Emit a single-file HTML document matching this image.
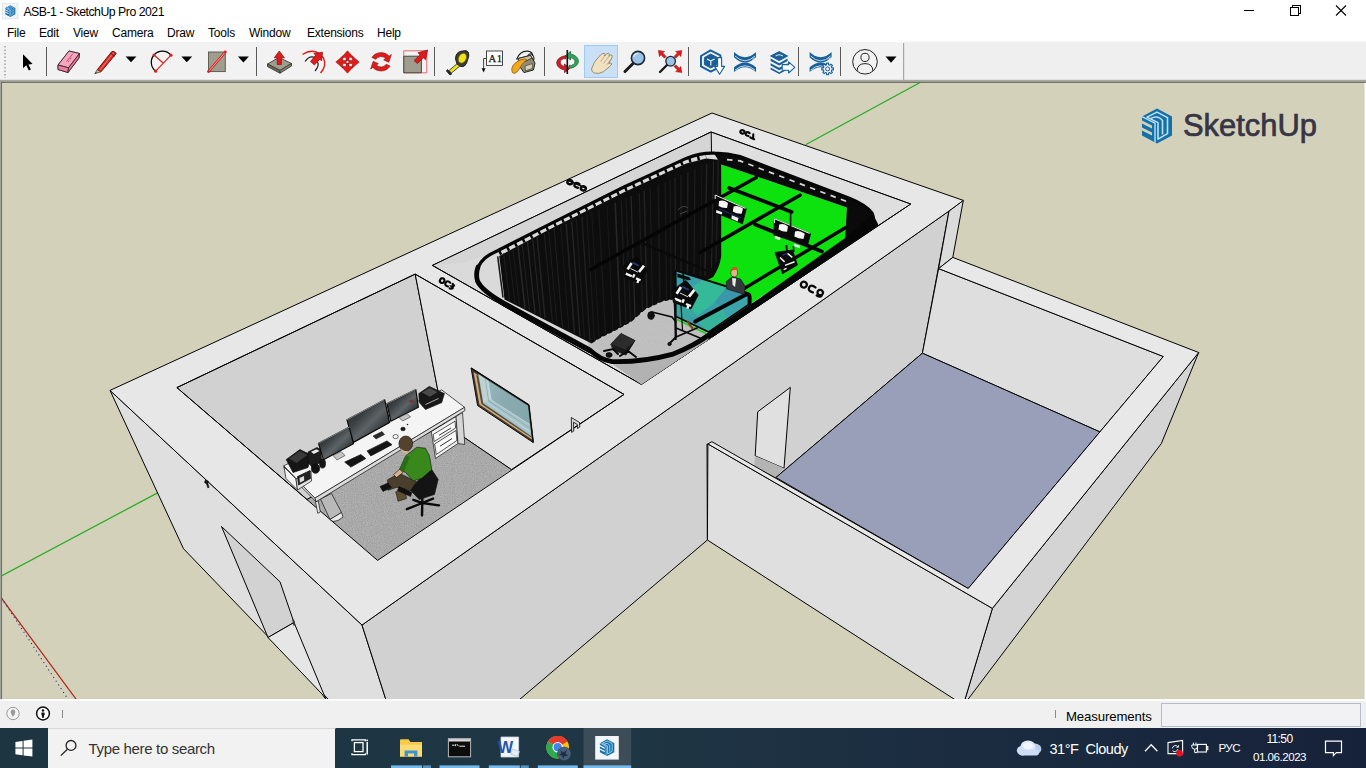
<!DOCTYPE html>
<html lang="en">
<head>
<meta charset="utf-8">
<title>ASB-1 - SketchUp Pro 2021</title>
<style>
*{box-sizing:border-box;margin:0;padding:0}
html,body{width:1366px;height:768px;overflow:hidden;background:#fff;font-family:"Liberation Sans",sans-serif;color:#000}
#titlebar{position:absolute;left:0;top:0;width:1366px;height:22px;background:#fff}
#title{position:absolute;left:23.4px;top:4.6px;font-size:12.3px;line-height:14px;white-space:nowrap;letter-spacing:-0.5px}
#menubar{position:absolute;left:0;top:22px;width:1366px;height:19px;background:#fff}
#menubar span{position:absolute;top:3.8px;font-size:12px;line-height:14px;white-space:nowrap;letter-spacing:-0.22px}
#toolbar{position:absolute;left:0;top:41.5px;width:1366px;height:40px;background:#f2f2f2}
#viewport{position:absolute;left:0;top:81px;width:1366px;height:619px;background:#d3d1b9;overflow:hidden}
#statusbar{position:absolute;left:0;top:699.4px;width:1366px;height:29px;background:#f0f0f0;border-top:2px solid #fcfcfd}
#meas{position:absolute;left:1066px;top:7.4px;font-size:13.2px;line-height:15px;letter-spacing:-0.12px}
#measbox{position:absolute;left:1161px;top:2px;width:199.6px;height:23.8px;background:#f2f2f4;border:1px solid #b5bbcb}
#taskbar{position:absolute;left:0;top:728px;width:1366px;height:40px;background:linear-gradient(90deg,#1d3441 0%,#1f3644 45%,#1b2c40 70%,#16223a 100%)}
#search{position:absolute;left:48px;top:0;width:287px;height:40px;background:#f2f2f2}
#search span{position:absolute;left:40.5px;top:12px;font-size:15px;line-height:18px;color:#333;white-space:nowrap;letter-spacing:-0.33px}
.tray{position:absolute;color:#fff;white-space:nowrap}
svg{position:absolute;left:0;top:0;overflow:visible}
</style>
</head>
<body>
<div id="titlebar">
  <div id="title">ASB-1 - SketchUp Pro 2021</div>
</div>
<div id="menubar">
  <span style="left:7px">File</span>
  <span style="left:39px">Edit</span>
  <span style="left:73px">View</span>
  <span style="left:112px">Camera</span>
  <span style="left:167px">Draw</span>
  <span style="left:208px">Tools</span>
  <span style="left:249px">Window</span>
  <span style="left:307px">Extensions</span>
  <span style="left:377px">Help</span>
</div>
<div id="toolbar"></div>
<div id="viewport">
<svg id="scene" width="1366" height="619" viewBox="0 81 1366 619" style="left:0;top:0">
<g id="axes" fill="none" stroke-width="1.2">
  <line x1="0" y1="576.6" x2="160" y2="491.6" stroke="#22ac22"/>
  <line x1="806" y1="144.5" x2="921" y2="82" stroke="#22ac22"/>
  <line x1="0" y1="596.2" x2="77" y2="700.4" stroke="#b0281c"/>
  <line x1="1.5" y1="598" x2="68" y2="699.2" stroke="#26268c" stroke-width="1.1" stroke-dasharray="1.1 3.4"/>
</g>
<g id="main" stroke="#000" stroke-width="1" stroke-linejoin="round">
  <!-- west face -->
  <polygon points="110,390.4 362,625 386,700 329,700 183.5,548.7" fill="#dfdfdf"/>
  <!-- west door -->
  <polygon points="221.5,526.5 280,581.8 294,622.5 268,637.5" fill="#d2d2d2"/>
  <polygon points="268,637.5 294,622.5 326,699.5 322,694" fill="#e6e6e6"/>
  <!-- front face -->
  <polygon points="949,211 362,625 386,700 519,700 707.4,540 707,444 776,477.5 922.4,353.2" fill="#d1d1d1"/>
  <!-- east strip -->
  <polygon points="949,211 963.3,200.4 952.8,257.4 938.6,268.6" fill="#dbdbdb"/>
  <!-- roof -->
  <polygon points="712,113 963.3,200.4 949,211 362,625 110,390.4" fill="#e7e7e7"/>
</g>
<g id="annex" stroke="#000" stroke-width="1" stroke-linejoin="round">
  <!-- door opening in main front face -->
  <polygon points="757.7,411.8 790.3,387.4 784,468.3 755.2,455.9" fill="#e0e0e0"/>
  <polygon points="755.2,455.9 784,468.3 775.9,477.5 754.2,466" fill="#b4b4b4" stroke="none"/>
  <!-- back wall inner face -->
  <polygon points="938.6,268.6 1163.3,356.5 1099.9,431.9 922.4,353.2" fill="#dedede"/>
  <!-- blue floor -->
  <polygon points="922.4,353.2 1099.9,431.9 968.2,588.5 775.9,477.5" fill="#999fb9"/>
  <!-- right outer face -->
  <polygon points="1198.7,352.5 1161.3,443.6 967.5,700 964.8,700 992.4,608.4" fill="#d4d4d4"/>
  <!-- front wall outer face -->
  <polygon points="707.9,443.9 992.4,608.4 964.8,700 955.5,700 707.4,540" fill="#dfdfdf"/>
  <!-- wall tops -->
  <polygon points="952.8,257.4 1198.7,352.5 992.4,608.4 707.9,443.9 711.9,441.7 968.2,588.5 1163.3,356.5 938.6,268.6" fill="#e8e8e8"/>
</g>
<defs>
  <filter id="noise" x="0" y="0" width="100%" height="100%">
    <feTurbulence type="fractalNoise" baseFrequency="0.9" numOctaves="2" seed="3" result="n"/>
    <feColorMatrix type="matrix" values="0 0 0 0 0  0 0 0 0 0  0 0 0 0 0  0.13 0.13 0.13 0 -0.13"/>
    <feComposite in2="SourceGraphic" operator="in"/>
  </filter>
  <linearGradient id="mon" x1="0" y1="0" x2="1" y2="1">
    <stop offset="0" stop-color="#23272a"/><stop offset="0.35" stop-color="#3a3f42"/><stop offset="0.55" stop-color="#5d6366"/><stop offset="0.75" stop-color="#33383b"/><stop offset="1" stop-color="#1f2326"/>
  </linearGradient>
  <linearGradient id="glass" x1="0" y1="0" x2="1" y2="0.6">
    <stop offset="0" stop-color="#9dbcc1"/><stop offset="0.5" stop-color="#8aacb1"/><stop offset="1" stop-color="#83a6ac"/>
  </linearGradient>
</defs>
<g id="room1" stroke="#000" stroke-width="1" stroke-linejoin="round">
  <!-- back wall -->
  <polygon points="176.9,387.6 415.2,274.1 444.4,424 307,499.5" fill="#d1d1d1"/>
  <!-- NE wall -->
  <polygon points="415.2,274.1 624,394.4 511.4,469.6 444.4,424" fill="#e3e3e3"/>
  <!-- floor -->
  <polygon points="444.4,424 511.4,469.6 377.6,560.4 307,499.5" fill="#b5b5b5" stroke="none"/>
  <polygon points="444.4,424 511.4,469.6 377.6,560.4 307,499.5" fill="#fff" stroke="none" filter="url(#noise)"/>
  <polyline points="307,499.5 444.4,424 511.4,469.6" fill="none" stroke-width="0.9"/>
  <!-- re-stroke opening edge -->
  <polygon points="176.9,387.6 415.2,274.1 624,394.4 377.6,560.4" fill="none"/>
  <!-- door-frame fragment on NE wall -->
  <polygon points="571.3,417.5 579.5,422.5 579.8,427 577.5,428.5 577.3,424.5 573.5,422.2 573.8,431 571.6,432.4" fill="#d8d8d8" stroke-width="0.8"/>
  <!-- window -->
  <polygon points="471.1,368 528.8,404.9 533.2,442.5 477.6,405.6" fill="#4a3424" stroke="#111" stroke-width="1"/>
  <polygon points="473.6,372.2 528.4,407 532,439.6 479.4,404.6" fill="#c8b083" stroke="none"/>
  <polygon points="476.2,374.6 528.4,407.6 531.4,437.6 481.4,404" fill="#5a4634" stroke="none"/>
  <polygon points="478.3,374.2 528.5,406 531.2,435.9 483.3,403.2" fill="url(#glass)" stroke="#6d8e94" stroke-width="0.5"/>
  <polygon points="478.6,374.6 487.8,380.6 491.2,400.1 483.4,403" fill="#bcd2d5" stroke="none"/>
  <polygon points="483.4,403 491.2,400.1 529.8,424.5 531.2,435.9" fill="#a5c3c8" stroke="none"/>
  <polyline points="487.8,380.6 491.2,400.1 529.8,424.5" fill="none" stroke="#d4e3e5" stroke-width="0.7"/>
  <polyline points="485.4,379.2 488.6,401 530.6,428.6" fill="none" stroke="#7f9fa5" stroke-width="0.6"/>
  <polyline points="486.5,402.2 530.8,432.2" fill="none" stroke="#d4e3e5" stroke-width="0.6"/>
  <line x1="528.8" y1="404.9" x2="533.2" y2="442.5" stroke="#0c0c0c" stroke-width="1.5"/>
  <line x1="471.1" y1="368" x2="528.8" y2="404.9" stroke="#0c0c0c" stroke-width="1.4"/>
</g>
<g id="desk" stroke="#111" stroke-width="0.7" stroke-linejoin="round">
  <!-- pc tower -->
  <polygon points="320.5,499 331.5,493.5 341.5,512.5 330,519.5" fill="#b9b9b9"/>
  <polygon points="330,519.5 341.5,512.5 343,517 338,520.5 333,521.5" fill="#e9e9e9"/>
  <!-- desk legs / drawers -->
  <polygon points="431.3,431.5 456,416.5 458,443.5 435.5,458.5" fill="#f0f0f0"/>
  <polygon points="456,416.5 462.5,412.5 464.8,444.5 458,443.5" fill="#d6d6d6"/>
  <polygon points="433.2,434.5 455,421.2 455.6,428 434.2,441.5" fill="#fafafa"/>
  <polygon points="434.6,444 456,430.5 456.9,440.5 436.3,454.5" fill="#fafafa"/>
  <line x1="439" y1="435.3" x2="451" y2="428" stroke="#333" stroke-width="1"/>
  <line x1="440" y1="446.2" x2="452" y2="438.6" stroke="#333" stroke-width="1"/>
  <polygon points="315.5,502 318.2,500.6 320.3,512 317.8,513.3" fill="#e8e8e8"/>
  <!-- desk top -->
  <polygon points="283.7,465.8 441.7,389.9 464.6,407.3 314.8,498.2" fill="#f4f4f4"/>
  <polygon points="464.6,407.3 464.9,410.6 316,501.8 314.8,498.2" fill="#dcdcdc"/>
  <polygon points="283.7,465.8 314.8,498.2 316,501.8 285,470" fill="#e2e2e2"/>
  <!-- left cabinet under printer -->
  <polygon points="284,467 296,479 297.5,490 286,478.5" fill="#f2f2f2"/>
  <polygon points="296,479 311,471 311.5,481 297.5,490" fill="#e4e4e4"/>
  <!-- printer -->
  <polygon points="286.2,459.6 299.9,449.6 311,455 308,467.5 293,472.5" fill="#161616"/>
  <polygon points="289,458.5 300,451 307.5,455 296.5,463" fill="#3a3a3a" stroke="none"/>
  <!-- small devices -->
  <polygon points="308,452 317,447.5 321,450 321.5,462 312,467 308.5,463" fill="#1c1c1c"/>
  <polygon points="311,451.8 316.5,449.2 319.5,451 313.8,454" fill="#e8e8e8" stroke="none"/>
  <polygon points="297.5,476.5 310,470.5 310.5,478.5 298.5,485" fill="#222"/>
  <polygon points="299.5,478 304,476 304.2,480.5 299.9,482.8" fill="#ddd" stroke="none"/>
  <ellipse cx="315.5" cy="468.5" rx="4.2" ry="4.8" fill="#111"/>
  <ellipse cx="322.5" cy="463.5" rx="3" ry="4.6" fill="#151515"/>
  <!-- monitors -->
  <polygon points="318.5,443.4 349.8,426.8 353.4,443.8 323.5,459.8" fill="url(#mon)" stroke="#0c0c0c" stroke-width="1.2"/>
  <polygon points="347,419.9 384.6,399.7 389.6,422.5 353.4,442.4" fill="url(#mon)" stroke="#0c0c0c" stroke-width="1.3"/>
  <polygon points="387,403.6 415.8,389.6 418.4,407.3 390.8,421.2" fill="url(#mon)" stroke="#0c0c0c" stroke-width="1.2"/>
  <ellipse cx="411.5" cy="401.2" rx="2.6" ry="1.6" fill="#7a3434" stroke="none"/>
  <polyline points="318.5,443.4 349.8,426.8" fill="none" stroke="#b8b8b8" stroke-width="0.7"/>
  <polyline points="347,419.9 384.6,399.7" fill="none" stroke="#b8b8b8" stroke-width="0.7"/>
  <polyline points="387,403.6 415.8,389.6" fill="none" stroke="#b8b8b8" stroke-width="0.7"/>
  <!-- monitor stands -->
  <polygon points="333,455.5 341,451.5 345,455.5 337,460" fill="#c4c4c4" stroke-width="0.5"/>
  <polygon points="373,436 382,431.5 384.5,434.5 376,439" fill="#2a2a2a" stroke-width="0.5"/>
  <polygon points="399,417.5 407,413.5 410.5,417 402.5,421" fill="#c4c4c4" stroke-width="0.5"/>
  <!-- keyboards -->
  <polygon points="344.7,462.1 360.8,454.6 365.8,458.6 350.9,467.1" fill="#141414"/>
  <polygon points="367.1,450.9 387,440.9 392,444.7 370.8,455.9" fill="#141414"/>
  <ellipse cx="403" cy="429" rx="2.2" ry="1.8" fill="#1a1a1a"/>
  <circle cx="407.5" cy="424.5" r="0.8" fill="#1a1a1a" stroke="none"/>
  <ellipse cx="395.6" cy="436.6" rx="2.6" ry="2" fill="#fff" stroke="#222" stroke-width="0.7"/>
  <!-- fax -->
  <polygon points="418.8,393.6 429.3,386.4 444.4,393.6 441.7,402.6 425.5,409.5 419.3,402.6" fill="#181818"/>
  <polygon points="422,392.5 429.5,388 437.5,392 430,396.8" fill="#4a4a4a" stroke="none"/>
  <polyline points="425.5,404.5 438.5,398.5" fill="none" stroke="#cfcfcf" stroke-width="0.8"/>
</g>
<g id="person1" stroke="#111" stroke-width="0.6" stroke-linejoin="round">
  <!-- chair base -->
  <g stroke="#0a0a0a" stroke-width="2.4" stroke-linecap="round" fill="none">
    <line x1="422.3" y1="503" x2="406.8" y2="509.2"/>
    <line x1="422.3" y1="503" x2="422" y2="515.4"/>
    <line x1="422.3" y1="503" x2="439" y2="505.4"/>
    <line x1="422.3" y1="503" x2="433" y2="498.6"/>
    <line x1="422.3" y1="503" x2="413.4" y2="499.8"/>
    <line x1="422.3" y1="490" x2="422.3" y2="503"/>
  </g>
  <!-- legs / shoes -->
  <polygon points="387.6,479.8 399.4,473.3 416,481.5 411,491 397,487.3 388,490.3" fill="#4a3f2c"/>
  <polygon points="380,486.5 388,483 391.5,487.5 383,491.5" fill="#101010"/>
  <polygon points="395.8,491.8 404.8,488.6 406.5,498.6 398,501.2" fill="#5e4e30"/>
  <!-- chair seat/back -->
  <polygon points="410.6,490.5 416.8,481.5 431.8,469.6 438.2,479.5 434.5,494.4 419.3,499.6" fill="#141414"/>
  <polygon points="399,486.5 412,492.5 410.5,496.5 397.5,490.5" fill="#111"/>
  <!-- shirt -->
  <polygon points="399.4,469.6 405.6,455.9 416.8,447.2 425.5,448.2 429.5,455.9 431.8,469.6 421.8,478.3 413.1,481 405.6,472.5" fill="#38881c"/>
  <polygon points="399.4,469.6 405.6,455.9 410,456.5 404,471.5" fill="#2a6d14" stroke="none"/>
  <polygon points="393.5,474.5 399.8,469.2 403,472.5 396.5,477.5" fill="#d9b38c"/>
  <!-- head -->
  <ellipse cx="405.8" cy="443.6" rx="6.9" ry="7.6" fill="#54422e"/>
  <path d="M400.4,447.5 q2.5,4.2 7.5,3.2 l-1.2,3 q-4,0.5 -6.3,-6.2z" fill="#d9b38c" stroke="none"/>
</g>
<defs>
  <filter id="noise2" x="0" y="0" width="100%" height="100%">
    <feTurbulence type="fractalNoise" baseFrequency="0.9" numOctaves="2" seed="8" result="n"/>
    <feColorMatrix type="matrix" values="0 0 0 0 0  0 0 0 0 0  0 0 0 0 0  0.04 0.04 0.04 0 -0.04"/>
    <feComposite in2="SourceGraphic" operator="in"/>
  </filter>
  <linearGradient id="teal" x1="0" y1="0" x2="1" y2="1">
    <stop offset="0" stop-color="#2aa79a"/><stop offset="0.45" stop-color="#5cc4bd"/><stop offset="1" stop-color="#38b5b0"/>
  </linearGradient>
</defs>
<g id="studio" stroke-linejoin="round">
<polygon points="432.4,265.4 711,132 910.7,204 641.4,384.4" fill="#dadada" stroke="#000" stroke-width="1"/>
<polygon points="711.4,132.6 910.2,204.3 874,226 712,160" fill="#dfdfdf" stroke="none"/>
<polygon points="432.4,265.4 711.4,132.6 711.5,154 686,159 624,187.5 549,225 497,251.5 462,263" fill="#d5d5d5" stroke="none"/>
<polygon points="432.4,265.4 711,132 910.7,204 641.4,384.4" fill="none" stroke="#000" stroke-width="1"/>
<line x1="711.2" y1="132.4" x2="711.5" y2="153" stroke="#000" stroke-width="1"/>
<polygon points="598,354 641.4,384.4 714,336 690,346 650,361 620,363" fill="#b2b2b2" stroke="none"/>
<path d="M585,330 L589.2,349.6 Q600,358 612,361.5 Q642,362.5 672,354.4 Q694,346 709.4,334.5 L754,305 L721,259 Z" fill="#c3c3c3" stroke="none"/>
<path d="M592,344 L661,300 L700,285 L730,300 L709.4,334.5 Q694,346 672,354.4 Q642,362.5 612,361.5 Z" fill="#fff" stroke="none" filter="url(#noise2)"/>
<path d="M721.2,164.4 L740,170.7 L846.9,207.6 L845,240 L756.3,300 L748,306 L706,332 L690,322 L700,280 L713.3,277 Q719.5,268 720.3,256.6 Z" fill="#0ee20e" stroke="none"/>
<path d="M714,153.5 L740,156.6 L850,198.5 Q866,205 872,213 Q875,221 870,228.5 L845,240 L846.9,207.6 L740,170.7 L721.2,164.4 Z" fill="#0a0a0a" stroke="none"/>
<path d="M499.2,256 L549.3,229.6 L624,192.2 L686.2,163.6 L706,158.6 L721.2,160 L721.2,256.6 Q719.5,268 713.3,277 L705,281 L676.6,272 L676.6,299 L662.5,301.5 L645.3,309.5 L631.2,322 L615.6,330.5 L600,338.2 L591.6,343.6 L504.5,299.5 Z" fill="#0d0d0d" stroke="none"/>
<g><line x1="497.7" y1="256.3" x2="503.0" y2="297.5" stroke="#1a1a1a" stroke-width="1.6"/><line x1="503.6" y1="253.3" x2="509.5" y2="300.5" stroke="#1d1d1d" stroke-width="1.3"/><line x1="508.7" y1="250.8" x2="515.0" y2="303.3" stroke="#1d1d1d" stroke-width="1"/><line x1="512.9" y1="248.7" x2="519.5" y2="305.6" stroke="#1a1a1a" stroke-width="1.3"/><line x1="518.0" y1="246.2" x2="525.0" y2="308.4" stroke="#272727" stroke-width="1.6"/><line x1="522.2" y1="244.2" x2="529.5" y2="310.7" stroke="#222" stroke-width="1"/><line x1="527.5" y1="241.7" x2="535.0" y2="313.4" stroke="#272727" stroke-width="1.3"/><line x1="532.7" y1="239.2" x2="540.5" y2="316.2" stroke="#272727" stroke-width="1"/><line x1="537.1" y1="237.1" x2="545.0" y2="318.5" stroke="#222" stroke-width="1.6"/><line x1="544.3" y1="233.7" x2="552.5" y2="322.3" stroke="#222" stroke-width="1"/><line x1="548.8" y1="231.7" x2="557.0" y2="324.6" stroke="#1d1d1d" stroke-width="1"/><line x1="554.2" y1="229.1" x2="562.5" y2="327.4" stroke="#222" stroke-width="1"/><line x1="560.7" y1="226.2" x2="569.0" y2="330.7" stroke="#1a1a1a" stroke-width="1"/><line x1="566.2" y1="223.7" x2="574.5" y2="333.4" stroke="#222" stroke-width="1.6"/><line x1="571.7" y1="221.2" x2="580.0" y2="336.2" stroke="#272727" stroke-width="1.3"/><line x1="576.3" y1="219.1" x2="584.5" y2="338.5" stroke="#1a1a1a" stroke-width="1.3"/><line x1="581.9" y1="216.6" x2="590.0" y2="341.3" stroke="#222" stroke-width="1.3"/><line x1="586.8" y1="214.6" x2="594.5" y2="340.2" stroke="#1a1a1a" stroke-width="1.3"/><line x1="591.7" y1="212.5" x2="599.0" y2="337.3" stroke="#1a1a1a" stroke-width="1"/><line x1="598.8" y1="209.5" x2="605.5" y2="334.0" stroke="#1a1a1a" stroke-width="1.3"/><line x1="607.0" y1="206.1" x2="613.0" y2="330.3" stroke="#1a1a1a" stroke-width="1"/><line x1="615.2" y1="202.7" x2="620.5" y2="326.3" stroke="#272727" stroke-width="1.6"/><line x1="621.2" y1="200.2" x2="626.0" y2="323.3" stroke="#1d1d1d" stroke-width="1.3"/><line x1="626.1" y1="198.1" x2="630.5" y2="320.9" stroke="#1a1a1a" stroke-width="1.3"/><line x1="631.1" y1="196.1" x2="635.0" y2="317.1" stroke="#272727" stroke-width="1.3"/><line x1="639.3" y1="192.7" x2="642.5" y2="310.5" stroke="#1d1d1d" stroke-width="1.3"/><line x1="644.2" y1="190.6" x2="647.0" y2="307.2" stroke="#222" stroke-width="1.6"/><line x1="650.1" y1="188.1" x2="652.5" y2="304.7" stroke="#1d1d1d" stroke-width="1"/><line x1="658.2" y1="184.7" x2="660.0" y2="301.2" stroke="#1a1a1a" stroke-width="1.6"/><line x1="665.3" y1="181.7" x2="666.5" y2="299.3" stroke="#1a1a1a" stroke-width="1.3"/><line x1="670.1" y1="179.7" x2="671.0" y2="298.5" stroke="#1a1a1a" stroke-width="1.3"/><line x1="675.0" y1="177.6" x2="675.5" y2="297.7" stroke="#272727" stroke-width="1"/><line x1="680.9" y1="175.1" x2="681.0" y2="271.4" stroke="#1a1a1a" stroke-width="1.6"/><line x1="687.9" y1="172.2" x2="687.5" y2="272.7" stroke="#222" stroke-width="1.3"/><line x1="694.9" y1="169.2" x2="694.0" y2="274.1" stroke="#1d1d1d" stroke-width="1.3"/><line x1="701.9" y1="166.2" x2="700.5" y2="275.4" stroke="#1a1a1a" stroke-width="1"/><line x1="706.7" y1="164.2" x2="705.0" y2="275.5" stroke="#222" stroke-width="1.6"/><line x1="713.6" y1="161.2" x2="711.5" y2="267.7" stroke="#272727" stroke-width="1"/><line x1="718.4" y1="159.2" x2="716.0" y2="262.3" stroke="#1d1d1d" stroke-width="1.6"/></g>
<g stroke="none"><circle cx="597.0" cy="340.9" r="1.5" fill="#c3c3c3"/><circle cx="602.6" cy="337.7" r="1.5" fill="#c3c3c3"/><circle cx="608.2" cy="335.0" r="1.5" fill="#c3c3c3"/><circle cx="613.8" cy="332.2" r="1.5" fill="#c3c3c3"/><circle cx="619.4" cy="329.2" r="1.5" fill="#c3c3c3"/><circle cx="625.0" cy="326.2" r="1.5" fill="#c3c3c3"/><circle cx="630.6" cy="323.1" r="1.5" fill="#c3c3c3"/><circle cx="636.2" cy="318.4" r="1.5" fill="#c3c3c3"/><circle cx="641.8" cy="313.4" r="1.5" fill="#c3c3c3"/><circle cx="647.4" cy="309.3" r="1.5" fill="#c3c3c3"/><circle cx="653.0" cy="306.7" r="1.5" fill="#c3c3c3"/><circle cx="658.6" cy="304.1" r="1.5" fill="#c3c3c3"/><circle cx="664.2" cy="302.0" r="1.5" fill="#c3c3c3"/><circle cx="669.8" cy="301.0" r="1.5" fill="#c3c3c3"/></g>
</g>
<g id="rig" fill="none" stroke="#050505" stroke-linecap="round" stroke-linejoin="round">
  <!-- hooks between rail and curtain (NW) -->
  <path d="M499,253 L549.3,227 L624,189.6 L686.2,161 L706,156" stroke="#050505" stroke-width="5" stroke-dasharray="2.4 6.4" stroke-linecap="butt"/>
  <!-- scallops (NE) -->
  <path d="M727,159.6 L740,160.9 L850,202.8" stroke="#d6d6d6" stroke-width="1.7" stroke-dasharray="5.5 5.5" stroke-linecap="butt"/>
  <!-- grid bars -->
  <line x1="590.7" y1="269.4" x2="756.3" y2="177.5" stroke-width="3.4"/>
  <line x1="700" y1="252.5" x2="800" y2="195.2" stroke-width="3.6"/>
  <line x1="729.2" y1="187.9" x2="791.7" y2="211.9" stroke-width="3.8"/>
  <line x1="755.2" y1="224.4" x2="821.9" y2="251.5" stroke-width="3.8"/>
  <line x1="741.7" y1="290" x2="845.8" y2="227.5" stroke-width="3.4"/>
  <line x1="640" y1="242" x2="705" y2="270" stroke-width="2.4" stroke="#0a0a0a"/>
  <!-- rail -->
  <path d="M497,251 L549.3,224.4 L624,187 L686.2,158.4 Q701,152.5 714.9,153.2 Q728,153.5 740,156.6 L850,198.5 Q866,205 872,213 Q875.5,221 870,228.5 L828.9,254.9 L754.2,304.7 L709.4,334.5 Q694,346 672,354.4 Q642,362.5 612,361.6 Q600,360 589.2,349.6 L504.5,303.5 Q482,291 477.5,281 Q474,268 485,258 Q490,254 497,251 Z" stroke-width="3.2"/>
  <!-- near rail thick -->
  <path d="M720,327.4 L709.4,334.5 Q694,346 672,354.4 Q642,362.5 612,361.6 Q600,360 589.2,349.6 L504.5,303.5 Q482,291 477.5,281 Q475.5,274 478,267" stroke-width="4.8"/>
  <!-- SE band -->
  <polygon points="848,236 760,298 712,330.5 707.5,340.2 760,305.2 878.6,225.2 873,214" fill="#060606" stroke="none"/>
  <!-- SW rail shadow (curtain top visible below rail) -->
  <path d="M504.5,305 L589.2,351.3" stroke-width="3.4"/>
</g>
<g id="teal" stroke-linejoin="round">
  <polygon points="675.4,270.4 748.3,293.3 749.6,303.8 708.7,332 675.4,316.3" fill="#3b9faa" stroke="none"/>
  <polygon points="692,287 704,279.5 727,287 714,303 697,316 684,309" fill="#35bc97" stroke="none" opacity="0.9"/>
  <polygon points="727,287 745,292.6 722,306 714,303" fill="#3a97a8" stroke="none"/>
  <polygon points="697,321.5 722,308 749.4,296 749.6,303.8 708.7,332" fill="#37b39c" stroke="none"/>
  <polygon points="722,308 749.4,296 749.6,303.8 728,318" fill="#3ba3aa" stroke="none"/>
  <polygon points="676,296 690,306 697,316 684,321 676,316" fill="#3aa6a2" stroke="none"/>
  <path d="M675.6,270.4 L675.6,340" stroke="#060606" stroke-width="2" fill="none"/>
  <path d="M675.4,270.4 L748.3,293.3" stroke="#080808" stroke-width="2" fill="none"/>
  <path d="M695.2,321.5 L746,294.6 Q749.4,293 749.6,297 L749.6,303.8" stroke="#050505" stroke-width="4" fill="none" stroke-linecap="round"/>
  <path d="M675.4,316.3 L708.7,332 L749.6,304" stroke="#080808" stroke-width="1.8" fill="none"/>
  <path d="M677,319.6 L706,333.4" stroke="#14d414" stroke-width="1.7" fill="none"/>
  <path d="M677.4,273.6 l12,3.6 l1.6,2.6 l-3,0.4 l-10.6,-3z" fill="#0c0c0c" stroke="none"/>
</g>
<g id="lights" stroke="#0a0a0a" stroke-width="0.8" stroke-linejoin="round">
  <!-- light A -->
  <polygon points="715,195 746.3,208.8 742.5,223.8 715,212.5" fill="#0a0a0a"/>
  <path d="M719.2,201 Q723.5,199.4 728,203 L727,208 Q722.5,208.4 718.6,206 Z" fill="#f6f6f6" stroke="none"/>
  <path d="M733.6,206.4 Q738.5,205 743,208.6 L741.6,213.8 Q736.6,214 732.8,211.6 Z" fill="#f6f6f6" stroke="none"/>
  <path d="M716.4,210 L722.4,212.2 L721.6,214.6 L716,212.8 Z M731.8,215.2 L738.6,218 L737.6,221.4 L731.4,218.8 Z" fill="#f0f0f0" stroke="none"/>
  <path d="M715.2,199 L715.2,195 L745.4,208.4" stroke="#ededed" stroke-width="1" fill="none"/>
  <path d="M719,208.8 L741,218" stroke="#1e2a7a" stroke-width="1" fill="none"/>
  <!-- light B -->
  <polygon points="774.4,218.8 810.6,233.8 807.5,245.6 773.8,235" fill="#0a0a0a"/>
  <path d="M779.2,224.6 Q783.5,223 788,226.6 L787,231.8 Q782.5,232 778.6,229.6 Z" fill="#f6f6f6" stroke="none"/>
  <path d="M795,231.4 Q800,230 804.8,233.8 L803.4,239 Q798.4,239 794.4,236.6 Z" fill="#f6f6f6" stroke="none"/>
  <path d="M775,235.8 L780.6,237.8 L780,240.2 L774.8,238.4 Z M794.4,243.8 L800,245.8 L799.4,248 L794,246.2 Z" fill="#f0f0f0" stroke="none"/>
  <path d="M774.6,223 L774.6,218.8 L809.6,233.4" stroke="#ededed" stroke-width="1" fill="none"/>
  <path d="M790.6,213 L790.6,226" stroke="#0a0a0a" stroke-width="1.6" fill="none"/>
  <!-- light C (spot) -->
  <polygon points="775,252.5 792.5,250 797.5,265 782.5,273.8" fill="#0a0a0a"/>
  <path d="M780,257.5 l4.6,4.4 M787.5,253.4 l4.8,4 M785,265.4 l9.6,-3.6 M783.6,269.6 l3,-1.2" stroke="#f2f2f2" stroke-width="1.5" fill="none"/>
  <path d="M782.6,255.4 q2.4,-2 4.6,-1" stroke="#26306a" stroke-width="1.4" fill="none"/>
  <line x1="786.4" y1="245" x2="787" y2="252" stroke="#0a0a0a" stroke-width="1.8"/>
  <line x1="793.4" y1="246" x2="793.8" y2="252" stroke="#0a0a0a" stroke-width="1.4"/>
  <!-- light D -->
  <polygon points="623.4,265.5 636.5,256.5 647.2,270 640.4,284 624.6,277.5" fill="#090909"/>
  <path d="M627.6,269.4 l4,-6.4 M639,272 l5,-6.4" stroke="#f6f6f6" stroke-width="2.6" fill="none"/>
  <path d="M625.8,273.6 l6,2.6 M633,277.6 l1.4,-3.4 M636,278.4 l4.6,1.8 M637.4,283 l1.2,-3.6" stroke="#f6f6f6" stroke-width="2.3" fill="none"/>
  <path d="M632.5,262.6 l6.5,3.2" stroke="#2a3478" stroke-width="1.8" fill="none"/>
  <path d="M630.5,268.5 l7.5,3.6" stroke="#d8d8e8" stroke-width="1" fill="none"/>
  <line x1="634.5" y1="250" x2="635" y2="258.5" stroke="#0a0a0a" stroke-width="1.6"/>
  <!-- light E -->
  <polygon points="671.6,290.5 686,280.5 698.2,295 691,309 673.4,302.4" fill="#090909"/>
  <path d="M676.6,293.8 l4.4,-6.8 M689,296.6 l5.4,-6.8" stroke="#f6f6f6" stroke-width="2.7" fill="none"/>
  <path d="M674.6,298.6 l6.6,2.8 M682.4,302.8 l1.4,-3.6 M686,304 l5,2 M687.4,308.6 l1.2,-3.8" stroke="#f6f6f6" stroke-width="2.4" fill="none"/>
  <path d="M682,286.6 l7,3.4" stroke="#2a3478" stroke-width="1.9" fill="none"/>
  <path d="M680,293 l8,3.8" stroke="#d8d8e8" stroke-width="1" fill="none"/>
  <line x1="683" y1="272" x2="684" y2="283" stroke="#0a0a0a" stroke-width="1.6"/>
  <!-- light F (dim, in curtain area) -->
  <path d="M678,210 q5,-6 10,-2 M680,214 l7,-3" stroke="#4a4a4a" stroke-width="0.9" fill="none"/>
</g>
<g id="stand" stroke="#0a0a0a" fill="none" stroke-linecap="round">
  <!-- tripod / light stand -->
  <line x1="674.5" y1="300" x2="676" y2="337" stroke-width="1.8"/>
  <line x1="681" y1="304" x2="682.5" y2="330" stroke-width="1.2"/>
  <path d="M652,312 L672,317 L676,322" stroke-width="1.6"/>
  <ellipse cx="651" cy="315.5" rx="3.2" ry="3.8" fill="#111" stroke-width="1"/>
  <path d="M676,337 L670,343 M676,337 L697,328 M676,328 L700,338" stroke-width="1.8"/>
  <ellipse cx="669.5" cy="344" rx="1.6" ry="1.6" fill="#111"/>
  <path d="M688,322 l4,6" stroke="#8a3a1a" stroke-width="2.2"/>
  <!-- camera box on floor -->
  <polygon points="611,344 621,333.5 635,340.5 626,355 613.5,350" fill="#1a1a1a" stroke-width="0.8"/>
  <polygon points="611,344 621,333.5 635,340.5 625,349.5" fill="#2c2c2c" stroke="none"/>
  <path d="M604,351 l9,-2 l5,5 M620,356 l8,-5 l8,6" stroke-width="2"/>
  <ellipse cx="609" cy="355" rx="3" ry="2.4" fill="#111" stroke-width="0.8"/>
</g>
<g id="person2" stroke="#111" stroke-width="0.5" transform="translate(-0.4,2)">
  <polygon points="726.5,279.5 733,274.5 741,277 745.5,284 745,292.5 735,289.5 727,287" fill="#33383c"/>
  <polygon points="732.5,276 736.5,276.5 735.5,285 733,283" fill="#e8e8e8" stroke="none"/>
  <ellipse cx="734.6" cy="270.6" rx="3.4" ry="4.2" fill="#e2b48c"/>
  <path d="M731.2,269.5 q0.6,-4.8 4.6,-4.4 q3,0.6 2.6,4.2 q-2.4,-2.6 -7.2,0.2z" fill="#cc5a1e" stroke="none"/>
</g>
<g id="labels" fill="none" stroke="#080808" stroke-width="2.4" stroke-linecap="round">
  <g transform="translate(576.8,185.2) rotate(21)"><ellipse cx="-7.6" cy="-0.4" rx="2.5" ry="2.1"/><path d="M2,-2 q-4.4,-0.8 -4.4,2 q0,2.8 4.4,2"/><ellipse cx="7.2" cy="0.6" rx="2.5" ry="2.1"/><path d="M-9,-1.4 L9,-0.6" stroke-width="1.6"/></g>
  <g transform="translate(747.6,134) rotate(22)" stroke-width="2.1"><ellipse cx="-5.6" cy="0" rx="2.1" ry="1.7"/><path d="M1.6,-1.6 q-3.6,-0.8 -3.6,1.6 q0,2.4 3.6,1.6"/><path d="M5.4,-1.8 l1.4,4 M3.8,2.2 l4.2,0.2"/></g>
  <g transform="translate(447.4,283.6) rotate(30)" stroke-width="2.2"><ellipse cx="-6" cy="0" rx="2.2" ry="2.4"/><path d="M2,-2.2 q-4,-1 -4,2.2 q0,3.2 4,2.2"/><path d="M4.6,-2.4 q4.2,0.6 0.6,2.6 q3.8,1 -0.8,2.8"/></g>
  <g transform="translate(812.4,289) rotate(27)" stroke-width="2.3"><ellipse cx="-9.6" cy="0" rx="3" ry="3"/><path d="M2,-2.8 q-5.6,-1.2 -5.6,2.8 q0,4 5.6,2.8"/><path d="M11.4,-0.4 a2.8,2.6 0 1 0 -0.2,1 q0.6,3.8 -4.4,3.2"/></g>
</g>
<g id="misc" stroke="#111" fill="#111">
  <path d="M205.5,479.8 l3,1.6 l-0.6,2 l1.2,4 l-1.4,0.4 l-1,-3.6 l-2.2,-1.8z" stroke-width="0.6"/>
  <path d="M292.6,619.5 l1.6,1.2 l0.6,4.4 l-1.2,0.2z" stroke-width="0.5" fill="#555"/>
</g>

</svg>
</div>
<div id="statusbar">
  <div id="meas">Measurements</div>
  <div id="measbox"></div>
</div>
<div id="taskbar">
  <div id="search"><span>Type here to search</span></div>
  <div class="tray" style="left:1049.5px;top:12px;font-size:14.5px;line-height:18px;letter-spacing:-0.47px">31°F&nbsp; Cloudy</div>
  <div class="tray" style="left:1218.4px;top:13px;font-size:11.7px;line-height:14px;letter-spacing:-0.6px">РУС</div>
  <div class="tray" style="left:1266.4px;top:3.6px;font-size:12px;line-height:14px;letter-spacing:-0.62px">11:50</div>
  <div class="tray" style="left:1253px;top:22px;font-size:11.6px;line-height:14px;letter-spacing:-0.5px">01.06.2023</div>
</div>
<svg id="chrome" width="1366" height="768" viewBox="0 0 1366 768" style="pointer-events:none">
<defs>
  <symbol id="su" viewBox="0 0 32 35" overflow="visible">
    <path d="M16,0 L31,8 L31,27 L16,35 L1,27 L1,22 L11,27 L11,24 L1,19 L1,15 L11,20 L11,17 L1,12 L1,8 Z" fill="#1470a8"/>
    <path d="M6,8.5 L16,3.5 L26.5,9 L26.5,25 L17,30.5 L17,14 L6,8.5 Z" fill="#1470a8" stroke="#bfe0f2" stroke-width="1.6" stroke-linejoin="round"/>
    <path d="M9.5,10 Q17,6 21.5,12 L21.5,26" fill="none" stroke="#bfe0f2" stroke-width="1.6"/>
    <path d="M1,8 L14,14.5 L14,33.9" fill="none" stroke="#bfe0f2" stroke-width="1.4"/>
  </symbol>
  <symbol id="dd" viewBox="0 0 12 7" overflow="visible"><path d="M0,0 L12,0 L6,6.6 Z" fill="#000"/></symbol>
</defs>
<!-- title icon -->
<rect x="2.5" y="3.5" width="15.4" height="15.4" fill="#f1f4f9" stroke="#d5dbe6" stroke-width="0.6"/>
<use href="#su" x="4.9" y="5.2" width="10.8" height="11.8"/>
<!-- window controls -->
<g stroke="#000" stroke-width="1" fill="none" shape-rendering="crispEdges">
  <line x1="1244" y1="10.5" x2="1254" y2="10.5"/>
  <rect x="1290.5" y="7.5" width="8" height="8" fill="#fff"/>
  <polyline points="1292.5,7.5 1292.5,5.5 1300.5,5.5 1300.5,13.5 1298.5,13.5"/>
</g>
<g stroke="#000" stroke-width="1.1" fill="none">
  <line x1="1336" y1="5.5" x2="1346" y2="15.5"/><line x1="1346" y1="5.5" x2="1336" y2="15.5"/>
</g>
<!-- toolbar frame -->
<rect x="904" y="41.5" width="462" height="39" fill="#efefef"/>
<rect x="903" y="43" width="1.2" height="37.5" fill="#a6a6a6"/>
<rect x="0" y="79.8" width="1366" height="2.1" fill="#a8a8a2"/>
<rect x="1.1" y="81.8" width="1365" height="1.1" fill="#6a6a5e"/>
<rect x="0" y="81.8" width="1.1" height="617.4" fill="#a3a39d"/>
<rect x="1.1" y="81.8" width="0.95" height="617.4" fill="#6a6a5e"/>
<rect x="1364.5" y="82.9" width="1.5" height="616.3" fill="#fbfbfb"/>
<line x1="5" y1="46" x2="5" y2="78" stroke="#b5b5b5" stroke-width="2" stroke-dasharray="1.5 2"/>
<g stroke="#5a5a5a" stroke-width="1">
  <line x1="46.5" y1="47" x2="46.5" y2="76"/><line x1="256.5" y1="47" x2="256.5" y2="76"/>
  <line x1="434.5" y1="47" x2="434.5" y2="76"/><line x1="544.5" y1="47" x2="544.5" y2="76"/>
  <line x1="688.5" y1="47" x2="688.5" y2="76"/><line x1="798.5" y1="47" x2="798.5" y2="76"/>
  <line x1="840.5" y1="47" x2="840.5" y2="76"/>
</g>
<!-- select arrow -->
<path d="M23,54.2 L23,68.2 L26.3,65.2 L28.8,70.6 L30.9,69.6 L28.4,64.4 L32.6,64 Z" fill="#000"/>
<!-- eraser -->
<g stroke="#3a2a2e" stroke-width="0.9" stroke-linejoin="round">
  <path d="M58,65 L69,51 L79.5,53.5 L79,58 L68,72.5 L58,69.5 Z" fill="#f48fb0"/>
  <path d="M58,65 L69,51 L79.5,53.5 L68.5,67.8 Z" fill="#f7a6c0"/>
  <path d="M58,65 L68.5,67.8 L68,72.5 L58,69.5 Z" fill="#ee7fa3"/>
  <path d="M68.5,67.8 L79.5,53.5 L79,58 L68,72.5 Z" fill="#e8769b"/>
  <path d="M66.5,61.5 l6.5,-8 M68,62 l1.2,-1.6 M70,59.5 l1.3,-1.7" stroke="#b8486e" stroke-width="0.9" fill="none"/>
</g>
<!-- pencil -->
<g stroke-linejoin="round">
  <path d="M97.2,69.8 L111.8,51.6 Q114.5,50.5 116.2,53.6 L101,71.8 Z" fill="#d9231f" stroke="#5a1512" stroke-width="0.9"/>
  <path d="M99.8,70.2 L113.8,52.6" stroke="#f26a60" stroke-width="1.2" fill="none"/>
  <path d="M97.2,69.8 L101,71.8 L94.8,73.6 Z" fill="#e2c28f" stroke="#4a3a22" stroke-width="0.8"/>
  <path d="M96.3,72.2 L94.8,73.6 L96.9,73 Z" fill="#222"/>
  <path d="M110.6,53.2 l4,3.2" stroke="#5a1512" stroke-width="0.9"/>
</g>
<use href="#dd" x="125.5" y="56.4" width="11" height="6.3"/>
<!-- arc -->
<g fill="none">
  <path d="M155.7,71.2 A11.2,11.2 0 0 1 154,55 A11.2,11.2 0 0 1 171,55.2" stroke="#000" stroke-width="1.2"/>
  <path d="M155.7,71.2 L171,55.2 M154,55 L163.4,63.2" stroke="#d9231f" stroke-width="1.2"/>
  <circle cx="154" cy="55" r="1.6" fill="#d9231f"/><circle cx="171" cy="55.2" r="1.6" fill="#d9231f"/><circle cx="155.7" cy="71.2" r="1.6" fill="#d9231f"/>
</g>
<use href="#dd" x="181.3" y="56.4" width="11" height="6.3"/>
<!-- rectangle -->
<rect x="208.5" y="52" width="16.8" height="19.6" fill="#a09d8e" stroke="#55534a" stroke-width="0.9"/>
<line x1="208.5" y1="71.6" x2="225.3" y2="52" stroke="#d9231f" stroke-width="2.4"/>
<line x1="208.5" y1="71.6" x2="225.3" y2="52" stroke="#f8c8c4" stroke-width="0.8"/>
<circle cx="208.5" cy="71.6" r="1.4" fill="#d9231f"/><circle cx="225.3" cy="52" r="1.4" fill="#d9231f"/>
<use href="#dd" x="237.4" y="56.4" width="12" height="6.4"/>
<!-- push/pull -->
<g stroke-linejoin="round">
  <path d="M267.5,64 L279,57.5 L291.5,63.5 L280,70.5 Z" fill="#a09d8e" stroke="#3c3a33" stroke-width="0.9"/>
  <path d="M267.5,64 L280,70.5 L280,73.2 L267.5,66.6 Z" fill="#6e6b5e" stroke="#3c3a33" stroke-width="0.9"/>
  <path d="M280,70.5 L291.5,63.5 L291.5,66 L280,73.2 Z" fill="#86836f" stroke="#3c3a33" stroke-width="0.9"/>
  <path d="M277.2,64.5 L277.2,57.8 L274.2,57.8 L279.3,51 L284.4,57.8 L281.4,57.8 L281.4,64.5 Z" fill="#e01b1b" stroke="#8a1010" stroke-width="0.7"/>
</g>
<!-- follow me -->
<g fill="none" stroke-linejoin="round">
  <path d="M302.5,54.5 Q315,46.5 323.5,58 Q327,66 320.5,73" stroke="#e01b1b" stroke-width="1.4"/>
  <path d="M305,61.5 Q310,54.5 315.5,58" stroke="#222" stroke-width="1.2"/>
  <path d="M315,71 Q319.5,66 317.5,61.5" stroke="#222" stroke-width="1.2"/>
  <path d="M310.5,61.5 L315.8,55 L313.8,53.6 L322.6,52.2 L321.6,61 L319.8,59.2 L314.4,65 Z" fill="#e01b1b" stroke="#8a1010" stroke-width="0.7"/>
</g>
<!-- move -->
<g stroke-linejoin="round">
  <polygon points="347.5,54 355.5,62 347.5,70 339.5,62" fill="#fff"/>
  <g fill="#e01b1b" stroke="#8a1010" stroke-width="0.5">
    <path d="M347.5,50.8 L353.7,57.6 L349,57.6 L349,61 L346,61 L346,57.6 L341.3,57.6 Z"/>
    <path d="M347.5,73.2 L353.7,66.4 L349,66.4 L349,63 L346,63 L346,66.4 L341.3,66.4 Z"/>
    <path d="M335.8,62 L342.8,55.9 L342.8,60.5 L346.4,60.5 L346.4,63.5 L342.8,63.5 L342.8,68.1 Z"/>
    <path d="M359.2,62 L352.2,55.9 L352.2,60.5 L348.6,60.5 L348.6,63.5 L352.2,63.5 L352.2,68.1 Z"/>
  </g>
  <circle cx="347.5" cy="62" r="1" fill="#fff"/>
</g>
<!-- rotate -->
<g fill="#e01b1b" stroke="#8a1010" stroke-width="0.6" stroke-linejoin="round">
  <path d="M371.90,57.48 A10.30,9.20 0 0 1 389.12,56.14 L391.41,54.54 L388.82,62.29 L383.65,59.95 L385.59,58.60 A5.82,5.20 0 0 0 375.86,59.36 Z"/>
  <path d="M390.10,66.12 A10.30,9.20 0 0 1 372.88,67.46 L370.59,69.06 L373.18,61.31 L378.35,63.65 L376.41,65.00 A5.82,5.20 0 0 0 386.14,64.24 Z"/>
</g>
<!-- scale -->
<g stroke-linejoin="round">
  <rect x="403.8" y="50.8" width="23" height="22" fill="none" stroke="#e05a5a" stroke-width="0.9"/>
  <rect x="403.8" y="56.2" width="17.6" height="16.6" fill="#a09d8e" stroke="#3c3a33" stroke-width="0.9"/>
  <path d="M414,60.5 L420.2,55 L418,52.8 L427.6,50 L425.6,59.8 L423.4,57.8 L417.4,63.6 Z" fill="#e01b1b" stroke="#8a1010" stroke-width="0.7"/>
</g>
<!-- tape measure -->
<g stroke-linejoin="round">
  <path d="M449,70.5 L458.5,62.5 L461,65 L451.5,73 Z" fill="#f1e21c" stroke="#222" stroke-width="0.8"/>
  <path d="M447.5,69.5 L451.8,74 L450,75 L446.4,71 Z" fill="#222" stroke="#222" stroke-width="0.8"/>
  <path d="M455.5,59 Q455.5,52.5 461,51.2 L466,50.6 Q469.4,51.5 468.8,56 L466.5,63.5 Q464.5,67.5 460.5,66.5 L457,64 Z" fill="#3c3c34" stroke="#1a1a1a" stroke-width="0.9"/>
  <ellipse cx="462.4" cy="58.2" rx="3.8" ry="5.2" transform="rotate(28 462.4 58.2)" fill="#f1e21c" stroke="#6a6410" stroke-width="0.7"/>
</g>
<!-- text tool -->
<g>
  <rect x="486.5" y="51" width="16" height="14.4" fill="#fff" stroke="#333" stroke-width="0.9"/>
  <text x="488.6" y="62" font-family="'Liberation Serif',serif" font-size="10.6" fill="#111" stroke="#111" stroke-width="0.25" letter-spacing="0.4">A1</text>
  <path d="M486.5,58.5 L483.6,58.5 L483.6,69" fill="none" stroke="#333" stroke-width="0.9"/>
  <path d="M481.6,68.2 L485.6,68.2 L483.6,72.4 Z" fill="#111"/>
</g>
<!-- paint bucket -->
<g stroke-linejoin="round">
  <path d="M516.5,59.5 Q520,50.5 528,51.2 Q533,52 532.4,56" fill="none" stroke="#222" stroke-width="1.2"/>
  <ellipse cx="530.5" cy="58.5" rx="3.4" ry="4.6" fill="none" stroke="#222" stroke-width="1.2"/>
  <path d="M518,58.5 L530.5,55.4 L535,63 L533.4,70 L524,72.6 L519.4,66 Z" fill="#8e8b78" stroke="#222" stroke-width="1"/>
  <path d="M518,58.5 L530.5,55.4 L532,58 Q526,62.4 519.4,62 Z" fill="#c9c19a" stroke="#222" stroke-width="0.8"/>
  <path d="M525,66 L532.6,63.6 L532.2,68.6 L525.4,70.8 Z" fill="#d9d2ae" stroke="#333" stroke-width="0.6"/>
  <path d="M524.5,59 Q519,59.4 514.6,63.6 Q510.4,68 512.4,72.6 Q514.4,74.6 517.4,71.6 Q520.4,67.6 522,64.6 Q524,61.4 527,60 Z" fill="#f2a81a" stroke="#8a5a08" stroke-width="0.8"/>
</g>
<!-- orbit -->
<g stroke-linejoin="round">
  <path d="M566,55.5 Q557.5,57 556.6,62.5 Q557,68.5 564.5,70 L564.5,72.6 L570,68.4 L564.5,64 L564.5,66.6 Q560.4,65.6 560.2,62.8 Q560.6,59.6 566,58.6 Z" fill="#c8202a" stroke="#7a0f14" stroke-width="0.7"/>
  <path d="M569,68.5 Q577.5,67.5 578.5,61.5 Q578,55.5 570.5,54 L570.5,51.4 L565.4,55.6 L570.5,60 L570.5,57.4 Q574.8,58.4 575,61.2 Q574.6,64.6 569,65.6 Z" fill="#2fa45c" stroke="#14602f" stroke-width="0.7"/>
  <path d="M560.5,61 l4,-2.5 l0,5z M574.6,63 l-4,2.5 l0,-5z" fill="#fff" stroke="none"/>
  <line x1="567.3" y1="50" x2="567.3" y2="74" stroke="#111" stroke-width="1.6"/>
</g>
<!-- pan (selected) -->
<rect x="584.5" y="45.5" width="33" height="32" fill="#c9e0f7" stroke="#9ccbf5" stroke-width="1"/>
<g stroke-linejoin="round">
  <path d="M591.5,69 Q593.5,62 599,56.5 Q602.5,52.5 604.4,53.4 Q605.6,54.2 604.6,56 Q606.8,52.8 608.6,53.2 Q610,54 608.8,56.4 Q610.8,54.2 612,55.2 Q612.8,56.4 611.2,59 L608.6,63.6 Q610.6,62.6 611.6,63.6 Q612,64.8 609.6,66.6 L603.6,71.6 Q598.6,74.6 594.5,73 Q591.5,72 591.5,69 Z" fill="#f0e2c0" stroke="#8e8468" stroke-width="0.9"/>
  <path d="M600.5,62 L604.6,56 M603.5,63.6 L608.8,56.4 M606.4,65 L611,59.2" fill="none" stroke="#a89c7c" stroke-width="0.7"/>
</g>
<!-- zoom -->
<g>
  <line x1="625" y1="71.5" x2="633.5" y2="63" stroke="#1a1a1a" stroke-width="3" stroke-linecap="round"/>
  <circle cx="638" cy="58" r="6.6" fill="#9cc4e8" stroke="#1f2a36" stroke-width="1.6"/>
  <path d="M633.8,57 A4.4,4.4 0 0 1 638.4,53.4" fill="none" stroke="#d8eaf8" stroke-width="1.3"/>
</g>
<!-- zoom extents -->
<g>
  <line x1="660" y1="72" x2="667" y2="65" stroke="#1a1a1a" stroke-width="2.4" stroke-linecap="round"/>
  <circle cx="670.6" cy="61.2" r="4.8" fill="#9cc4e8" stroke="#1f2a36" stroke-width="1.3"/>
  <g fill="#e01b1b" stroke="#8a1010" stroke-width="0.5" stroke-linejoin="round">
    <path d="M658.4,50.4 L664.6,51.4 L662.8,53 L666.2,56.4 L664.4,58.2 L661,54.8 L659.4,56.6 Z"/>
    <path d="M681.8,50.4 L675.6,51.4 L677.4,53 L674,56.4 L675.8,58.2 L679.2,54.8 L680.8,56.6 Z"/>
    <path d="M681.8,72.6 L675.6,71.6 L677.4,70 L674,66.6 L675.8,64.8 L679.2,68.2 L680.8,66.4 Z"/>
  </g>
</g>
<!-- 3D warehouse -->
<g stroke-linejoin="round">
  <path d="M701,56 L710.5,50.4 L720.4,55.4 L720.4,66.6 L710.8,71.6 L701,66.4 Z" fill="#f0f0f0" stroke="#19609a" stroke-width="2"/>
  <path d="M704.4,57.6 L710.6,54 L717.2,57.4 L717.2,64.6 L710.8,68 L704.4,64.6 Z" fill="#19609a" stroke="#19609a" stroke-width="1"/>
  <path d="M710.8,61 L710.8,65.4 M710.8,61 L707,59 M710.8,61 L714.6,59" stroke="#f0f0f0" stroke-width="1.2" fill="none"/>
  <path d="M717.6,57.6 L721.6,57.6 L721.6,66.4 L724.6,66.4 L719.6,74.2 L714.6,66.4 L717.6,66.4 Z" fill="#fff" stroke="#19609a" stroke-width="1.1"/>
</g>
<!-- extension warehouse -->
<g id="xw" stroke-linejoin="round">
  <path d="M734,52 Q745,62.4 756,52 L756,57.2 Q745,67.8 734,57.2 Z" fill="#19609a"/>
  <path d="M735,56 Q745,65.6 755,56" fill="none" stroke="#eef4fa" stroke-width="0.8"/>
  <path d="M734,71.9 Q745,62.4 756,71.9 L756,67.2 Q745,57.8 734,67.2 Z" fill="#19609a"/>
  <path d="M735,70.2 Q745,61.4 755,70.2" fill="none" stroke="#eef4fa" stroke-width="0.8"/>
  <path d="M752,53 l3,-1.6 l1,0.6 M752,59.5 l3,-1.8" stroke="#eef4fa" stroke-width="0.7" fill="none"/>
</g>
<!-- layout -->
<g stroke-linejoin="round">
  <path d="M770.6,56 L779.2,51.6 L787.6,56 L779.2,60.6 Z" fill="#19609a" stroke="#19609a" stroke-width="1"/>
  <path d="M775.6,56.2 Q779.2,53.2 782.8,56.2" fill="none" stroke="#f0f0f0" stroke-width="1.1"/>
  <path d="M770.6,58.6 L779.2,63.2 L787.6,58.6 L787.6,61 L779.2,65.6 L770.6,61 Z M770.6,63.2 L779.2,67.8 L787.6,63.2 L787.6,65.6 L779.2,70.2 L770.6,65.6 Z M770.6,67.6 L779.2,72.2 L787.6,67.6 L787.6,69.4 L779.2,74 L770.6,69.4 Z" fill="#19609a" stroke="none"/>
  <path d="M782.2,64.6 L788.6,64.6 L788.6,61.8 L794.8,67.4 L788.6,73 L788.6,70.2 L782.2,70.2 Z" fill="#fff" stroke="#19609a" stroke-width="1.1"/>
</g>
<!-- extension manager -->
<use href="#xw" x="75.6" y="0"/>
<g>
  <path d="M833.41,67.89 L833.41,69.91 L831.78,69.90 L831.27,71.15 L832.43,72.29 L830.99,73.73 L829.85,72.57 L828.60,73.08 L828.61,74.71 L826.59,74.71 L826.60,73.08 L825.35,72.57 L824.21,73.73 L822.77,72.29 L823.93,71.15 L823.42,69.90 L821.79,69.91 L821.79,67.89 L823.42,67.90 L823.93,66.65 L822.77,65.51 L824.21,64.07 L825.35,65.23 L826.60,64.72 L826.59,63.09 L828.61,63.09 L828.60,64.72 L829.85,65.23 L830.99,64.07 L832.43,65.51 L831.27,66.65 L831.78,67.90 Z" fill="#f4f4f4" stroke="#19609a" stroke-width="1.1" stroke-linejoin="round"/>
  <circle cx="827.6" cy="68.9" r="2" fill="#f4f4f4" stroke="#19609a" stroke-width="1"/>
</g>
<!-- user -->
<g fill="none" stroke="#222" stroke-width="1">
  <circle cx="865" cy="61.8" r="12.3"/>
  <circle cx="865" cy="57.4" r="4.1"/>
  <path d="M857,71 Q857.4,63.6 865,63.6 Q872.6,63.6 873,71"/>
</g>
<use href="#dd" x="885" y="56.6" width="12" height="6.4"/>
<!-- status bar icons -->
<g>
  <circle cx="13" cy="713.5" r="6.2" fill="#f4f4f4" stroke="#9a9a9a" stroke-width="1"/>
  <path d="M13,709.6 a2.3,2.3 0 0 1 2.3,2.3 q0,1.6 -2.3,5 q-2.3,-3.4 -2.3,-5 a2.3,2.3 0 0 1 2.3,-2.3z" fill="#9a9a9a"/>
  <circle cx="43" cy="713.5" r="6.4" fill="#fff" stroke="#111" stroke-width="1.5"/>
  <circle cx="43" cy="710.4" r="1.25" fill="#111"/>
  <path d="M41.4,712.6 h3.2 v2.6 h-0.6 v2.6 h-2 v-2.6 h-0.6z" fill="#111"/>
  <rect x="62" y="710" width="1" height="8" fill="#8a8a8a"/>
  <rect x="1055" y="710" width="1" height="8" fill="#8a8a8a"/>
</g>
<!-- viewport logo -->
<use href="#su" x="1141" y="108.6" width="32" height="35"/>
<text x="1183" y="136" font-family="'Liberation Sans',sans-serif" font-size="31" fill="#363545" stroke="#363545" stroke-width="0.7" textLength="134" lengthAdjust="spacingAndGlyphs">SketchUp</text>
<!-- taskbar -->
<g>
  <rect x="48" y="728" width="287.5" height="1" fill="#d9d9d9"/>
  <rect x="583.5" y="728" width="47.7" height="40" fill="#3c4d58"/>
  <!-- windows logo -->
  <path d="M15.4,742 L22.6,741 L22.6,747.6 L15.4,747.6 Z M23.6,740.8 L32.4,739.6 L32.4,747.6 L23.6,747.6 Z M15.4,748.6 L22.6,748.6 L22.6,755.2 L15.4,754.2 Z M23.6,748.6 L32.4,748.6 L32.4,756.6 L23.6,755.4 Z" fill="#fff"/>
  <!-- search icon -->
  <circle cx="71" cy="745.4" r="4.9" fill="none" stroke="#222" stroke-width="1.3"/>
  <line x1="67.4" y1="749.2" x2="60.8" y2="755.6" stroke="#222" stroke-width="1.3"/>
  <!-- task view -->
  <g fill="none" stroke="#fff" stroke-width="1.3">
    <rect x="354.4" y="742.6" width="8.6" height="9"/>
    <path d="M352,741.2 L352,739.8 L365.4,739.8 L365.4,741.2 M352,753.2 L352,754.6 L365.4,754.6 L365.4,753.2"/>
    <path d="M367.2,742 L367.2,754.6" stroke-width="1.5"/>
    <rect x="366.4" y="739.6" width="1.6" height="1.6" fill="#fff" stroke="none"/>
  </g>
  <!-- file explorer -->
  <path d="M400,740.2 L400,756.6 L422,756.6 L422,742 L410.4,742 L408.6,739.2 L401,739.2 Q400,739.2 400,740.2 Z" fill="#f7c948"/>
  <path d="M400,744.6 L422,744.6 L422,756.6 L400,756.6 Z" fill="#fbdc74"/>
  <path d="M404.6,750.4 L417.4,750.4 L417.4,756.6 L414,756.6 L414,753.4 L408,753.4 L408,756.6 L404.6,756.6 Z" fill="#3f92d2"/>
  <!-- cmd -->
  <rect x="448.4" y="738.6" width="22.2" height="18.2" fill="#0c0c0c" stroke="#b9b9b9" stroke-width="1"/>
  <rect x="448.9" y="739.1" width="21.2" height="2.4" fill="#dcdcdc"/>
  <path d="M452,745.2 h2.6 M455.6,744.2 v2 M457,744.2 l1.4,2 M459.4,746.2 h5.6" stroke="#e6e6e6" stroke-width="1" fill="none"/>
  <!-- word -->
  <path d="M501,737 L518.6,737 L518.6,757 L501,757 Z" fill="#f4f7fb" stroke="#c9d4e4" stroke-width="0.8"/>
  <rect x="496.8" y="740.6" width="13" height="13" fill="#2a5caa" opacity="0.0"/>
  <text x="498" y="753.2" font-family="'Liberation Sans',sans-serif" font-size="16" font-weight="bold" fill="#2457a6">W</text>
  <path d="M512.6,749 L519.6,751.4 L517.6,756.6 L510.6,754.2 Z" fill="#e9eef6" stroke="#9fb2cf" stroke-width="0.6"/>
  <!-- chrome -->
  <g>
    <circle cx="557.7" cy="747.2" r="11.3" fill="#fbc116"/>
    <path d="M557.7,747.2 L547.9,741.6 A11.3,11.3 0 0 1 567.5,741.6 Z" fill="#e33b2e"/>
    <path d="M557.7,735.9 A11.3,11.3 0 0 1 567.5,741.55 L557.7,741.55 Z" fill="#e33b2e"/>
    <path d="M547.9,741.6 A11.3,11.3 0 0 0 557.7,758.5 L562.6,750 L557.7,747.2 Z" fill="#2da94f"/>
    <path d="M547.9,741.6 L552.8,750 L557.7,758.5 A11.3,11.3 0 0 1 547.9,741.6 Z" fill="#2da94f"/>
    <circle cx="557.7" cy="747.2" r="5.2" fill="#fff"/>
    <circle cx="557.7" cy="747.2" r="4.1" fill="#3f86e8"/>
    <circle cx="564.2" cy="753.8" r="6.8" fill="#47607a" stroke="#2c3e52" stroke-width="0.6"/>
    <path d="M560.4,750.6 l3,2 l3.6,-2.6 l-1.6,3.6 l3,2.2 l-3.8,0.2 l-1.4,3 l-1,-3.4 l-3.4,-0.6 l2.8,-1.8z" fill="#1f2c3c"/>
  </g>
  <!-- sketchup -->
  <rect x="595.2" y="736" width="23.6" height="23.6" fill="#f3f6f9"/>
  <use href="#su" x="599.4" y="739.2" width="15.4" height="17"/>
  <!-- underlines -->
  <g fill="#76b9ed">
    <rect x="391" y="765.4" width="31" height="2.6"/><rect x="423" y="765.4" width="8" height="2.6" fill="#5b93c0"/>
    <rect x="439.5" y="765.4" width="40" height="2.6"/>
    <rect x="488.8" y="765.4" width="31" height="2.6"/><rect x="520.8" y="765.4" width="8" height="2.6" fill="#5b93c0"/>
    <rect x="537.8" y="765.4" width="40" height="2.6"/>
    <rect x="583.5" y="765.4" width="47.7" height="2.6"/>
  </g>
  <!-- cloud -->
  <g>
    <ellipse cx="1035" cy="749" rx="6.4" ry="5.4" fill="#b9cdee"/>
    <ellipse cx="1028" cy="746.6" rx="7.6" ry="6.2" fill="#dfe9fa"/>
    <ellipse cx="1022.6" cy="750.6" rx="5.8" ry="4.8" fill="#d2e0f7"/>
    <rect x="1019" y="749.4" width="20" height="6" rx="3" fill="#cfdcf5"/>
    <ellipse cx="1028" cy="746" rx="5" ry="3.6" fill="#f2f6fd"/>
  </g>
  <!-- tray chevron -->
  <path d="M1145,751.2 L1151.2,744.8 L1157.4,751.2" fill="none" stroke="#fff" stroke-width="1.3"/>
  <!-- tray monitor icon -->
  <g fill="none" stroke="#fff" stroke-width="1.1">
    <path d="M1168,742.6 L1182.6,740.4 L1182.6,753.6 L1168,753.6 Z"/>
    <path d="M1172.4,748.4 a3,3 0 0 1 5.4,-1.6 M1178.4,745.2 v2 h-2" stroke-width="0.9"/>
    <path d="M1177.8,749.2 a3,3 0 0 1 -5.2,1.4" stroke-width="0.9"/>
  </g>
  <circle cx="1179.6" cy="753.2" r="3.3" fill="#e81123"/>
  <!-- battery plug -->
  <g fill="none" stroke="#fff" stroke-width="1.1">
    <rect x="1197.4" y="744.4" width="9" height="7.6"/>
    <path d="M1206.4,746.6 h1.4 v3.2 h-1.4"/>
    <path d="M1193.4,742.6 v2.4 M1196,742.6 v2.4 M1191.8,745 h5.8 v1.6 q0,2.4 -2.9,2.6 q-2.9,-0.2 -2.9,-2.6z M1194.7,749.2 v3.4 h2.6" stroke-width="1"/>
  </g>
  <!-- notification -->
  <path d="M1325.5,741.2 L1341.5,741.2 L1341.5,752.6 L1336.4,752.6 L1333.4,755.6 L1333.4,752.6 L1325.5,752.6 Z" fill="none" stroke="#fff" stroke-width="1.2"/>
</g>

</svg>
</body>
</html>
